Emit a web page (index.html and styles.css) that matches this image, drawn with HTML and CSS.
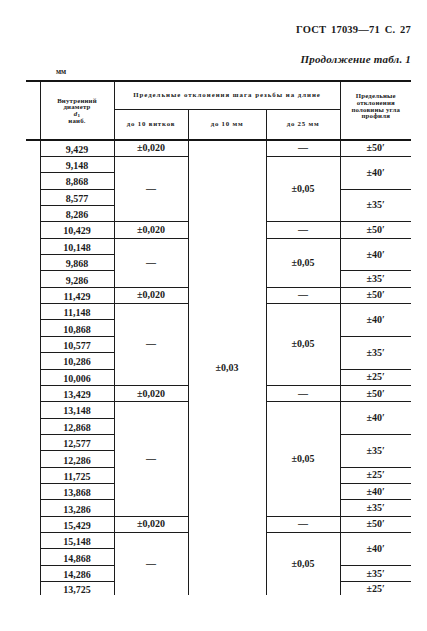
FILE: index.html
```html
<!DOCTYPE html>
<html lang="ru">
<head>
<meta charset="utf-8">
<title>ГОСТ 17039—71 С. 27</title>
<link rel="stylesheet" href="styles.css">
</head>
<body>
<div class="page">
  <p class="title">ГОСТ 17039—71 С. 27</p>
  <p class="subtitle">Продолжение табл. 1</p>
  <p class="unit">мм</p>
  <table class="tbl">
    <colgroup>
      <col class="w-gap"><col class="w1"><col class="w2"><col class="w3"><col class="w4"><col class="w5">
    </colgroup>
    <thead>
      <tr class="h1">
        <th class="gap" rowspan="2"></th>
        <th class="hc1" rowspan="2">Внутренний<br>диаметр<br><i>d</i><sub>1</sub><br>наиб.</th>
        <th class="grp" colspan="3">Предельные отклонения шага резьбы на длине</th>
        <th class="hc5" rowspan="2">Предельные<br>отклонения<br>половины угла<br>профиля</th>
      </tr>
      <tr class="h2">
        <th class="sub">до 10 витков</th>
        <th class="sub">до 10 мм</th>
        <th class="sub">до 25 мм</th>
      </tr>
    </thead>
    <tbody>
      <tr><td class="gap" rowspan="28"></td><td class="d">9,429</td><td>±0,020</td><td class="nb" rowspan="28">±0,03</td><td>—</td><td>±50′</td></tr>
      <tr><td class="d">9,148</td><td rowspan="4">—</td><td rowspan="4">±0,05</td><td rowspan="2">±40′</td></tr>
      <tr><td class="d">8,868</td></tr>
      <tr><td class="d">8,577</td><td rowspan="2">±35′</td></tr>
      <tr><td class="d">8,286</td></tr>
      <tr><td class="d">10,429</td><td>±0,020</td><td>—</td><td>±50′</td></tr>
      <tr><td class="d">10,148</td><td rowspan="3">—</td><td rowspan="3">±0,05</td><td rowspan="2">±40′</td></tr>
      <tr><td class="d">9,868</td></tr>
      <tr><td class="d">9,286</td><td>±35′</td></tr>
      <tr><td class="d">11,429</td><td>±0,020</td><td>—</td><td>±50′</td></tr>
      <tr><td class="d">11,148</td><td rowspan="5">—</td><td rowspan="5">±0,05</td><td rowspan="2">±40′</td></tr>
      <tr><td class="d">10,868</td></tr>
      <tr><td class="d">10,577</td><td rowspan="2">±35′</td></tr>
      <tr><td class="d">10,286</td></tr>
      <tr><td class="d">10,006</td><td>±25′</td></tr>
      <tr><td class="d">13,429</td><td>±0,020</td><td>—</td><td>±50′</td></tr>
      <tr><td class="d">13,148</td><td rowspan="7">—</td><td rowspan="7">±0,05</td><td rowspan="2">±40′</td></tr>
      <tr><td class="d">12,868</td></tr>
      <tr><td class="d">12,577</td><td rowspan="2">±35′</td></tr>
      <tr><td class="d">12,286</td></tr>
      <tr><td class="d">11,725</td><td>±25′</td></tr>
      <tr><td class="d">13,868</td><td>±40′</td></tr>
      <tr><td class="d">13,286</td><td>±35′</td></tr>
      <tr><td class="d">15,429</td><td>±0,020</td><td>—</td><td>±50′</td></tr>
      <tr><td class="d">15,148</td><td class="nb" rowspan="4">—</td><td class="nb" rowspan="4">±0,05</td><td rowspan="2">±40′</td></tr>
      <tr><td class="d">14,868</td></tr>
      <tr><td class="d">14,286</td><td>±35′</td></tr>
      <tr class="last"><td class="d nb">13,725</td><td class="nb">±25′</td></tr>
    </tbody>
  </table>
</div>
</body>
</html>
```

FILE: styles.css
```css
html, body {
  margin: 0;
  padding: 0;
  background: #ffffff;
}

body {
  color: #1a1a1a;
  font-family: "Liberation Serif", "Times New Roman", serif;
}

.page {
  width: 427px;
  box-sizing: border-box;
  padding: 24px 16px 0 26px;
}

.title {
  margin: 0;
  text-align: right;
  font-weight: bold;
  font-size: 10.5px;
  line-height: 12px;
  word-spacing: 2px;
  letter-spacing: 0.2px;
}

.subtitle {
  margin: 17px 0 0;
  text-align: right;
  font-style: italic;
  font-weight: bold;
  font-size: 11px;
  line-height: 12px;
  letter-spacing: 0.2px;
}

.unit {
  margin: 3px 0 0 30px;
  font-weight: bold;
  font-size: 7.5px;
  line-height: 8px;
}

.tbl {
  margin-top: 4px;
  width: 385px;
  table-layout: fixed;
  border-collapse: collapse;
}

.w-gap { width: 14px; }
.w1 { width: 74px; }
.w2 { width: 74px; }
.w3 { width: 78px; }
.w4 { width: 74px; }
.w5 { width: 71px; }

.tbl th {
  padding: 0;
  font-weight: bold;
  font-size: 6.8px;
  line-height: 6.6px;
  letter-spacing: 0.2px;
  text-align: center;
  vertical-align: middle;
  border-left: 1px solid #1c1c1c;
  border-bottom: 2px solid #151515;
}

.tbl .h1 th {
  border-top: 2px solid #151515;
}

.tbl .h1 { height: 28px; }
.tbl .h2 { height: 31px; }

.tbl th.gap {
  border-left: none;
}

.tbl th.grp {
  border-bottom: 1px solid #1c1c1c;
  letter-spacing: 1px;
}

.tbl th.sub {
  letter-spacing: 0.8px;
}

.tbl th.hc1 {
  padding-top: 1px;
}

.tbl th.hc1 sub {
  font-size: 5px;
  vertical-align: -1px;
  line-height: 0;
}

.tbl th.hc5 {
  padding-bottom: 8px;
}

.tbl tbody tr { height: 16.36px; }
.tbl tbody tr.last { height: 13px; }

.tbl td {
  padding: 0;
  font-weight: bold;
  font-size: 10px;
  line-height: 10px;
  text-align: center;
  vertical-align: middle;
  white-space: nowrap;
  border-left: 1px solid #1c1c1c;
  border-bottom: 1px solid #1c1c1c;
}

.tbl td.gap {
  border: none;
}

.tbl td.d {
  padding-top: 3px;
}

.tbl td.nb {
  border-bottom: none;
}
```
